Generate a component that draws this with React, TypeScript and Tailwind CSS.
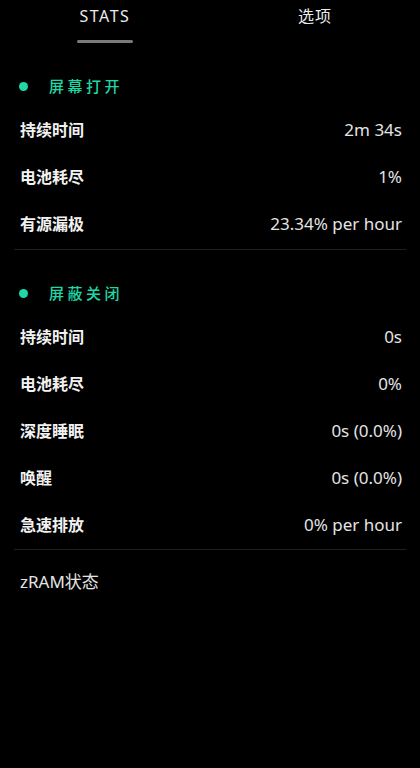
const font = { fontFamily: '"Noto Sans", "Noto Sans CJK SC", sans-serif' };

type Row = { label: string; value: string };

const screenOn: Row[] = [
  { label: '持续时间', value: '2m 34s' },
  { label: '电池耗尽', value: '1%' },
  { label: '有源漏极', value: '23.34% per hour' },
];

const screenOff: Row[] = [
  { label: '持续时间', value: '0s' },
  { label: '电池耗尽', value: '0%' },
  { label: '深度睡眠', value: '0s (0.0%)' },
  { label: '唤醒', value: '0s (0.0%)' },
  { label: '急速排放', value: '0% per hour' },
];

function SectionHeader({ title }: { title: string }) {
  return (
    <div className="flex items-center h-[40px] px-[5px]">
      <span className="w-[9px] h-[9px] rounded-full bg-[#1ed8a6]" />
      <span className="ml-[21px] text-[15px] font-medium tracking-[3.5px] text-[#1ed8a6]">{title}</span>
    </div>
  );
}

function StatRow({ label, value }: Row) {
  return (
    <div className="flex items-center justify-between h-[47px] pl-[6px] pr-[4px]">
      <span className="text-[16px] font-bold text-[#f2f2f2]">{label}</span>
      <span className="text-[17px] text-[#e4e4e4]">{value}</span>
    </div>
  );
}

export default function App() {
  return (
    <div className="w-[420px] h-[768px] bg-black overflow-hidden" style={font}>
      {/* Tabs */}
      <div className="flex h-[44px]">
        <div className="flex-1 flex flex-col items-center">
          <span className="mt-[4px] h-[24px] leading-[24px] text-[16px] tracking-[1.5px] text-[#ececec]">STATS</span>
          <div className="mt-[12px] w-[56px] h-[3px] rounded-full bg-[#7a7a7a]" />
        </div>
        <div className="flex-1 flex flex-col items-center">
          <span className="mt-[4px] h-[24px] leading-[24px] text-[16px] tracking-[1px] text-[#ececec]">选项</span>
        </div>
      </div>

      <div className="px-[14px]">
        <div className="mt-[22px]">
          <SectionHeader title="屏幕打开" />
          {screenOn.map((r) => (
            <StatRow key={r.label} {...r} />
          ))}
        </div>
        <div className="mt-[2px] h-px bg-[#202020]" />

        <div className="mt-[23px]">
          <SectionHeader title="屏蔽关闭" />
          {screenOff.map((r) => (
            <StatRow key={r.label} {...r} />
          ))}
        </div>
        <div className="mt-[1px] h-px bg-[#202020]" />

        <div className="mt-[12px] flex items-center h-[40px] px-[6px]">
          <span className="text-[17px] text-[#e4e4e4]">zRAM状态</span>
        </div>
      </div>
    </div>
  );
}
